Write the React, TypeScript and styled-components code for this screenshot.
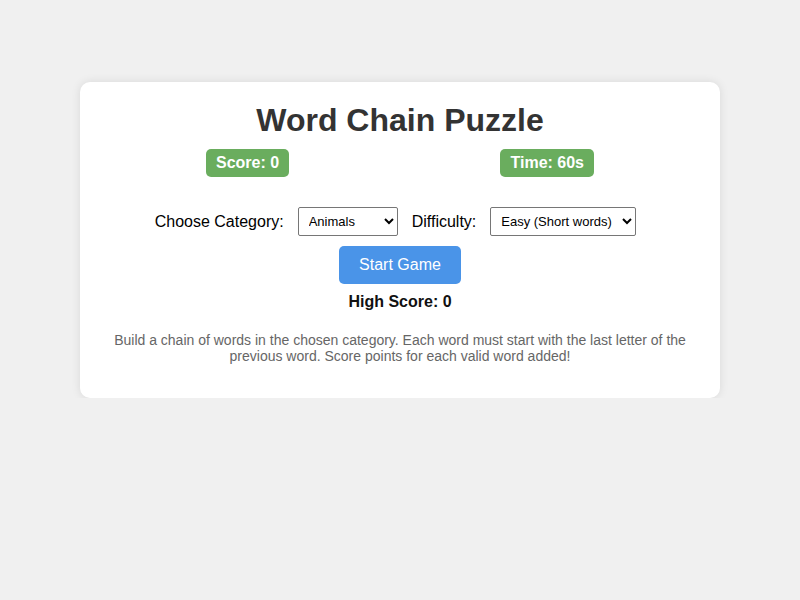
import React from "react";
import styled, { createGlobalStyle } from "styled-components";

const Global = createGlobalStyle`
  html, body { margin: 0; padding: 0; background: #f0f0f0; }
  body { font-family: "Liberation Sans", Arial, sans-serif; }
`;

const Card = styled.div`
  width: 600px;
  margin: 82px auto 0;
  padding: 20px;
  background: #ffffff;
  border-radius: 10px;
  box-shadow: 0 0 10px rgba(0, 0, 0, 0.1);
  text-align: center;
`;

const Title = styled.h1`
  margin: 0;
  font-size: 32px;
  font-weight: bold;
  color: #333333;
  line-height: 37px;
`;

const Stats = styled.div`
  width: 388px;
  margin: 10px auto 0;
  display: flex;
  justify-content: space-between;
`;

const Badge = styled.div`
  background: #6aad5e;
  color: #ffffff;
  font-weight: bold;
  font-size: 16px;
  line-height: 18px;
  padding: 5px 10px;
  border-radius: 5px;
`;

const Controls = styled.div`
  margin-top: 30px;
  display: flex;
  justify-content: center;
  align-items: center;
  gap: 14px;
  padding-right: 9px;
`;

const Label = styled.label`
  font-size: 16px;
  color: #000000;
`;

const Select = styled.select<{ $w: number }>`
  width: ${(p) => p.$w}px;
  height: 29px;
  padding: 0 4px 0 6px;
  font-family: "Liberation Sans", Arial, sans-serif;
  font-size: 13px;
  border: 1px solid #767676;
  border-radius: 2px;
  background: #ffffff;
  color: #000000;
`;

const StartButton = styled.button`
  margin-top: 10px;
  padding: 10px 20px;
  font-family: "Liberation Sans", Arial, sans-serif;
  font-size: 16px;
  line-height: 18px;
  color: #ffffff;
  background: #4a94e8;
  border: none;
  border-radius: 5px;
  cursor: pointer;
`;

const HighScore = styled.div`
  margin-top: 9px;
  font-size: 16px;
  font-weight: bold;
  line-height: 18px;
  color: #111111;
`;

const Description = styled.p`
  margin: 21px 0 14px;
  font-size: 14px;
  line-height: 16px;
  color: #666666;
`;

export default function App() {
  return (
    <>
      <Global />
      <Card>
        <Title>Word Chain Puzzle</Title>
        <Stats>
          <Badge>Score: 0</Badge>
          <Badge>Time: 60s</Badge>
        </Stats>
        <Controls>
          <Label htmlFor="category">Choose Category:</Label>
          <Select id="category" $w={100} defaultValue="animals">
            <option value="animals">Animals</option>
            <option value="countries">Countries</option>
            <option value="fruits">Fruits</option>
          </Select>
          <Label htmlFor="difficulty">Difficulty:</Label>
          <Select id="difficulty" $w={146} defaultValue="easy">
            <option value="easy">Easy (Short words)</option>
            <option value="medium">Medium</option>
            <option value="hard">Hard (Long words)</option>
          </Select>
        </Controls>
        <StartButton>Start Game</StartButton>
        <HighScore>High Score: 0</HighScore>
        <Description>
          Build a chain of words in the chosen category. Each word must start with the last letter of the
          previous word. Score points for each valid word added!
        </Description>
      </Card>
    </>
  );
}
